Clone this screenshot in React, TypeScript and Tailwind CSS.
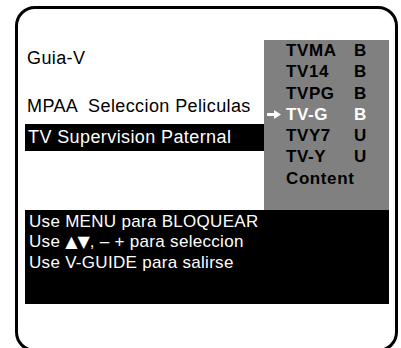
import React from "react";

const ratings = [
  { label: "TVMA", lock: "B" },
  { label: "TV14", lock: "B" },
  { label: "TVPG", lock: "B" },
  { label: "TV-G", lock: "B", active: true },
  { label: "TVY7", lock: "U" },
  { label: "TV-Y", lock: "U" },
  { label: "Content", lock: "" },
];

function Arrow() {
  return (
    <svg width="14" height="9" viewBox="0 0 14 9" className="fill-white">
      <rect x="0" y="3" width="8" height="3" />
      <polygon points="7,0 14,4.5 7,9" />
    </svg>
  );
}

export default function App() {
  return (
    <div className="h-[348px] w-[401px] overflow-hidden bg-white font-['Liberation_Sans',Arial,sans-serif] text-black">
      <div className="ml-[15px] mt-[6px] h-[346px] w-[383px] rounded-[20px] border-[3px] border-black pl-[7px] pr-[6px] pt-[31px]">
        <div className="flex">
          {/* left menu */}
          <div className="flex w-[239px] flex-col text-[18px] tracking-[0.4px]">
            <p className="mt-[8px] h-[20px] pl-[2px] leading-[20px]">Guia-V</p>
            <p className="mt-[28px] h-[20px] whitespace-pre pl-[2px] leading-[20px]">MPAA  Seleccion Peliculas</p>
            <p className="mt-[8px] h-[27px] bg-black pl-[3px] leading-[27px] text-white">TV Supervision Paternal</p>
          </div>

          {/* rating panel */}
          <div className="h-[170px] w-[125px] bg-[#808080] pl-[3px] text-[17px] font-bold tracking-[0.6px]">
            {ratings.map((r) => (
              <div key={r.label} className={"flex h-[21.3px] items-center leading-[21.3px] " + (r.active ? "text-white" : "text-black")}>
                <span className="flex w-[19px] items-center">{r.active && <Arrow />}</span>
                <span className="w-[68px] whitespace-nowrap">{r.label}</span>
                <span>{r.lock}</span>
              </div>
            ))}
          </div>
        </div>

        {/* help box */}
        <div className="h-[94px] bg-black pl-[4px] pt-[2px] text-[17px] leading-[20.4px] tracking-[0.3px] text-white">
          <p>Use MENU para BLOQUEAR</p>
          <p>
            Use <span className="font-['DejaVu_Sans'] text-[16px] tracking-[0px]">▲▼</span>, – + para seleccion
          </p>
          <p>Use V-GUIDE para salirse</p>
        </div>
      </div>
    </div>
  );
}
